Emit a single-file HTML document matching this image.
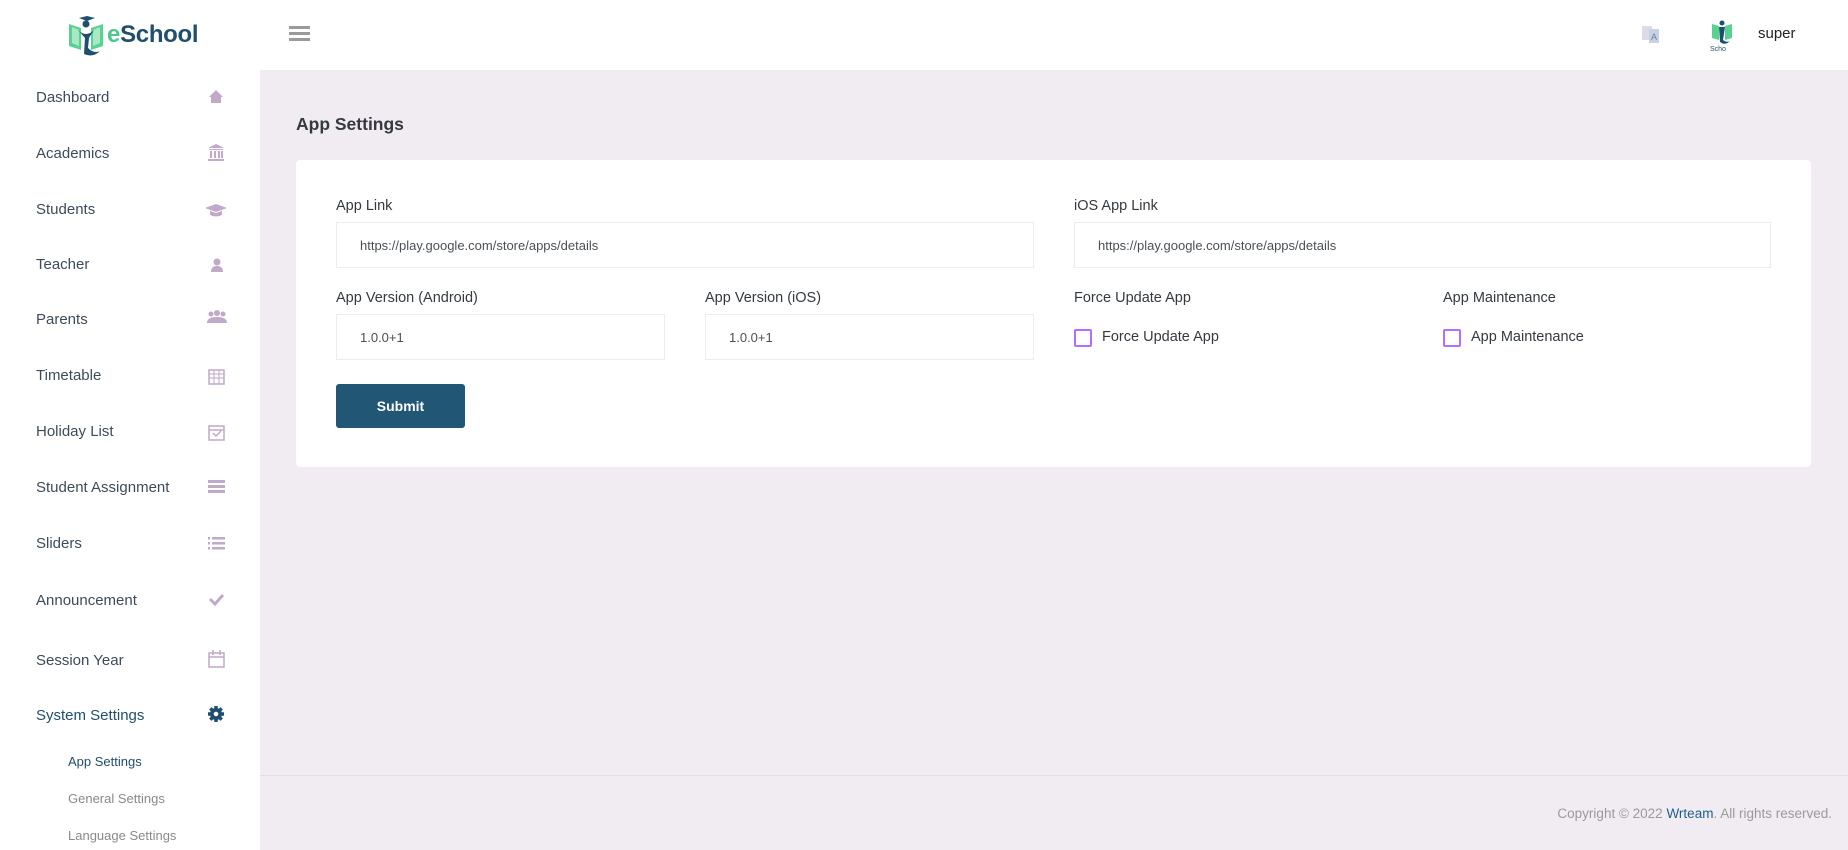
<!DOCTYPE html>
<html><head><meta charset="utf-8"><style>
*{margin:0;padding:0;box-sizing:border-box}
body{width:1848px;height:850px;overflow:hidden;font-family:"Liberation Sans",sans-serif;background:#f1ecf2;position:relative;color:#343a40}
.hdr{position:absolute;left:0;top:0;width:1848px;height:70px;background:#fff}
.side{position:absolute;left:0;top:70px;width:260px;height:780px;background:#fff}
.it{position:absolute;left:36px;font-size:15px;color:#3e4b5b}
.sub{position:absolute;left:68px;font-size:13px;color:#8a8a8a}
.abs{position:absolute}
.lbl{position:absolute;font-size:14.5px;color:#343a40}
.inp{position:absolute;height:46px;border:1px solid #ebedf2;background:#fff;font-size:13px;color:#495057;padding:15px 0 0 23px}
.cb{position:absolute;width:18px;height:18px;border:2px solid #b66dff;border-radius:2px}
</style></head><body>
<div class="hdr">
 <svg class="abs" style="left:67px;top:16px" width="38" height="42" viewBox="0 0 38 42">
  <path d="M2 8 L14 12 L14 34 L2 30Z" fill="#57d38f"/><path d="M36 8 L24 12 L24 34 L36 30Z" fill="#57d38f"/>
  <path d="M5 11 L12 14 L12 30 L5 27Z" fill="#a8e8c7"/><path d="M33 11 L26 14 L26 30 L33 27Z" fill="#a8e8c7"/>
  <path d="M12 2 L20 0 L28 2 L20 5Z" fill="#1f4e6e"/><circle cx="19" cy="8" r="3.5" fill="#1f4e6e"/>
  <path d="M11 14 Q19 22 27 14 L22 22 L21 32 Q27 38 33 35 Q26 42 17 38 L18 22Z" fill="#1f4e6e"/>
 </svg>
 <div class="abs" style="left:107px;top:21px;font-size:24px;font-weight:bold;color:#1f4e6e;letter-spacing:-0.3px"><span style="color:#4cc790">e</span>School</div>
 <div class="abs" style="left:289px;top:26px;width:21px;height:3px;background:#9a9a9a;box-shadow:0 6px 0 #9a9a9a,0 12px 0 #9a9a9a"></div>
 <svg class="abs" style="left:1641px;top:24px" width="20" height="22" viewBox="0 0 20 22"><rect x="1" y="2" width="10" height="14" fill="#dcdce4"/><rect x="8" y="5" width="10" height="14" fill="#c7d2e4"/><text x="10" y="16" font-size="9" fill="#6a7fa0" font-family="Liberation Sans">A</text></svg>
 <svg class="abs" style="left:1710px;top:18px" width="24" height="34" viewBox="0 0 24 34"><path d="M2 6 L9 8 L9 22 L2 20Z M22 6 L15 8 L15 22 L22 20Z" fill="#57d38f"/><circle cx="12" cy="5" r="2.5" fill="#1f4e6e"/><path d="M9 9 L15 9 L13 22 Q17 25 20 23 Q15 28 10 24Z" fill="#1f4e6e"/><text x="0" y="33" font-size="7" fill="#1f4e6e" font-family="Liberation Sans">Scho</text></svg>
 <div class="abs" style="left:1758px;top:25px;font-size:15px;color:#222">super</div>
</div>
<div class="side">
 <div class="it" style="top:19px">Dashboard</div>
 <div class="it" style="top:75px">Academics</div>
 <div class="it" style="top:131px">Students</div>
 <div class="it" style="top:186px">Teacher</div>
 <div class="it" style="top:241px">Parents</div>
 <div class="it" style="top:297px">Timetable</div>
 <div class="it" style="top:353px">Holiday List</div>
 <div class="it" style="top:409px">Student Assignment</div>
 <div class="it" style="top:465px">Sliders</div>
 <div class="it" style="top:522px">Announcement</div>
 <div class="it" style="top:582px">Session Year</div>
 <div class="it" style="top:637px;color:#1f4e6e">System Settings</div>
 <div class="sub" style="top:684px;color:#1f4e6e">App Settings</div>
 <div class="sub" style="top:721px">General Settings</div>
 <div class="sub" style="top:758px">Language Settings</div>
 <svg class="abs" style="left:206px;top:8px" width="24" height="600" viewBox="0 0 24 600" fill="#c1a9c9">
  <path d="M3 19 L10 12 L17 19 L15 19 L15 25 L5 25 L5 19Z"/>
  <path d="M2 70 L10 66 L18 70Z M3 71 H17 V72 H3Z M4 73 h2 v7 h-2z M8 73 h2 v7 h-2z M12 73 h2 v7 h-2z M15 73 h2 v7 h-2z M2 81 H18 V83 H2Z"/>
  <path d="M-1 130 L10 126 L21 130 L10 134Z M4 133 L4 137 Q10 140 16 137 L16 133 L10 135Z"/>
  <circle cx="11" cy="184" r="3.5"/><path d="M5 194 Q5 188 11 188 Q17 188 17 194Z"/>
  <circle cx="5" cy="236" r="2.5"/><circle cx="11" cy="235" r="3"/><circle cx="17" cy="236" r="2.5"/><path d="M1 245 Q1 239 11 239 Q21 239 21 245Z"/>
  <path d="M3 292 H18 V306 H3Z" fill="none" stroke="#c1a9c9" stroke-width="1.5"/><path d="M3 296 H18 M3 300 H18 M8 292 V306 M13 292 V306" stroke="#c1a9c9" stroke-width="1"/>
  <path d="M3 348 H18 V362 H3Z M3 352 H18 M7 355 L10 358 L15 353" fill="none" stroke="#c1a9c9" stroke-width="1.5"/>
  <path d="M2 402 H19 V405 H2Z M2 407 H19 V410 H2Z M2 412 H19 V415 H2Z"/>
  <path d="M2 459 h2 v2.5 h-2z M6 459 H19 V461.5 H6Z M2 464 h2 v2.5 h-2z M6 464 H19 V466.5 H6Z M2 469 h2 v2.5 h-2z M6 469 H19 V471.5 H6Z"/>
  <path d="M4 521 L9 526 L17 517" fill="none" stroke="#c1a9c9" stroke-width="3"/>
  <path d="M3 575 H18 V589 H3Z M3 579 H18 M7 572 V577 M14 572 V577" fill="none" stroke="#c1a9c9" stroke-width="1.5"/>
 </svg>
 <svg class="abs" style="left:207px;top:635px" width="18" height="18" viewBox="0 0 18 18"><g fill="#1f4e6e"><circle cx="9" cy="9" r="6"/><g stroke="#1f4e6e" stroke-width="3.5"><path d="M9 1V17M1 9H17M3.3 3.3L14.7 14.7M14.7 3.3L3.3 14.7"/></g></g><circle cx="9" cy="9" r="2.3" fill="#fff"/></svg>
</div>
<div class="abs" style="left:296px;top:114px;font-size:17.5px;font-weight:bold;color:#343a40">App Settings</div>
<div class="abs" style="left:296px;top:160px;width:1515px;height:307px;background:#fff;border-radius:4px"></div>
<div class="lbl" style="left:336px;top:198px">App Link</div>
<div class="inp" style="left:336px;top:222px;width:698px">https://play.google.com/store/apps/details</div>
<div class="lbl" style="left:1074px;top:198px">iOS App Link</div>
<div class="inp" style="left:1074px;top:222px;width:697px">https://play.google.com/store/apps/details</div>
<div class="lbl" style="left:336px;top:290px">App Version (Android)</div>
<div class="inp" style="left:336px;top:314px;width:329px">1.0.0+1</div>
<div class="lbl" style="left:705px;top:290px">App Version (iOS)</div>
<div class="inp" style="left:705px;top:314px;width:329px">1.0.0+1</div>
<div class="lbl" style="left:1074px;top:290px">Force Update App</div>
<div class="cb" style="left:1074px;top:329px"></div>
<div class="lbl" style="left:1102px;top:329px">Force Update App</div>
<div class="lbl" style="left:1443px;top:290px">App Maintenance</div>
<div class="cb" style="left:1443px;top:329px"></div>
<div class="lbl" style="left:1471px;top:329px">App Maintenance</div>
<div class="abs" style="left:336px;top:384px;width:129px;height:44px;background:#215675;border-radius:3px;color:#fff;font-weight:bold;font-size:14px;text-align:center;line-height:44px">Submit</div>
<div class="abs" style="left:260px;top:775px;width:1588px;height:1px;background:#e2dde4"></div>
<div class="abs" style="right:16px;top:806px;font-size:13.5px;color:#9a9a9a">Copyright © 2022 <span style="color:#1f5f8f">Wrteam</span>. All rights reserved.</div>
</body></html>
